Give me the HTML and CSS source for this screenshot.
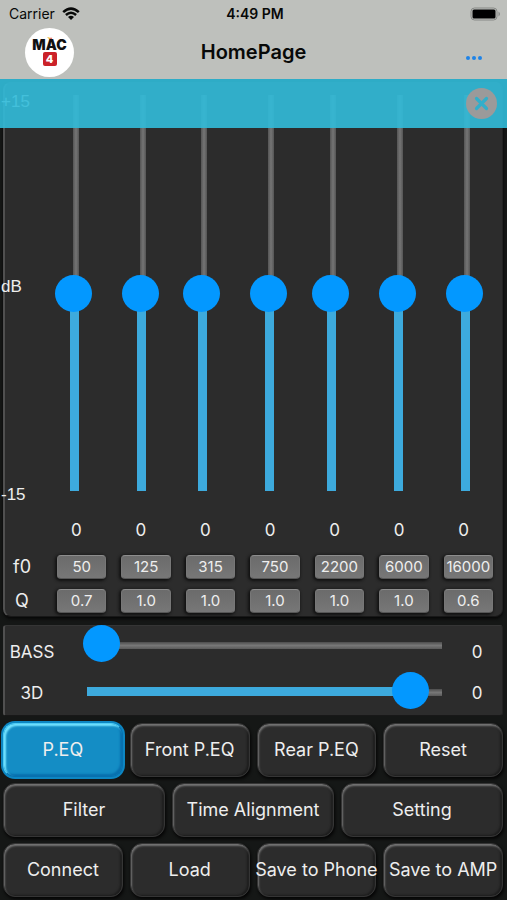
FILE: index.html
```html
<!DOCTYPE html>
<html lang="en">
<head>
<meta charset="utf-8">
<meta name="viewport" content="width=device-width, initial-scale=1">
<title>HomePage</title>
<link rel="stylesheet" href="styles.css">
</head>
<body>
<header class="header">
  <div class="status">
    <div class="carrier">
      <span>Carrier</span>
      <svg class="wifi" viewBox="0 0 18 14" aria-hidden="true">
        <path d="M1.2 5.2Q9-2 16.8 5.2M3.9 8Q9 3.4 14.1 8" fill="none" stroke="#080908" stroke-width="2.5"/>
        <path d="M6 9.900Q9 7.400 12 9.900L9 13z" fill="#080908"/>
      </svg>
    </div>
    <strong class="clock">4:49 PM</strong>
    <svg class="battery" viewBox="0 0 31 14" aria-label="Battery full">
      <rect x="1" y="1" width="26" height="12" rx="3.500" fill="none" stroke="#868885"/>
      <rect x="2.500" y="2.500" width="23" height="9" rx="1.500" fill="#000"/>
      <path d="M28.500 4.500q3 2.500 0 5z" fill="#868885"/>
    </svg>
  </div>
  <div class="navbar">
    <div class="logo" role="img" aria-label="MAC 4">
      <svg class="spark" viewBox="0 0 8 4" aria-hidden="true"><path d="M0 0l4 1v3z" fill="#f0b429"/><path d="M4 1l3 0-2 3z" fill="#e2574c"/></svg>
      <span class="logo-name">MAC</span>
      <span class="logo-num">4</span>
    </div>
    <h1 class="title">HomePage</h1>
    <button class="more" type="button" aria-label="More"><i></i><i></i><i></i></button>
  </div>
</header>

<main class="main">
  <div class="banner">
    <button class="close" type="button" aria-label="Close">
      <svg viewBox="0 0 31 31" aria-hidden="true"><circle cx="15.500" cy="15.500" r="15.500" fill="#9b9a9a"/><path d="M10.500 10.500l10 10M20.500 10.500l-10 10" stroke="#32aeca" stroke-width="3.200" stroke-linecap="round"/></svg>
    </button>
  </div>

  <section class="panel eq">
    <div class="faders">
      <div class="scale"><span>+15</span><span>dB</span><span>-15</span></div>
      <div class="tracks">
        <input class="vertical" type="range" min="-15" max="15" value="0" aria-label="Band 1 gain">
        <input class="vertical" type="range" min="-15" max="15" value="0" aria-label="Band 2 gain">
        <input class="vertical" type="range" min="-15" max="15" value="0" aria-label="Band 3 gain">
        <input class="vertical" type="range" min="-15" max="15" value="0" aria-label="Band 4 gain">
        <input class="vertical" type="range" min="-15" max="15" value="0" aria-label="Band 5 gain">
        <input class="vertical" type="range" min="-15" max="15" value="0" aria-label="Band 6 gain">
        <input class="vertical" type="range" min="-15" max="15" value="0" aria-label="Band 7 gain">
      </div>
    </div>
    <div class="gains">
      <output>0</output><output>0</output><output>0</output><output>0</output><output>0</output><output>0</output><output>0</output>
    </div>
    <div class="params">
      <span class="param-name">f0</span>
      <button type="button">50</button><button type="button">125</button><button type="button">315</button><button type="button">750</button><button type="button">2200</button><button type="button">6000</button><button type="button">16000</button>
      <span class="param-name">Q</span>
      <button type="button">0.7</button><button type="button">1.0</button><button type="button">1.0</button><button type="button">1.0</button><button type="button">1.0</button><button type="button">1.0</button><button type="button">0.6</button>
    </div>
  </section>

  <section class="panel effects">
    <label for="bass">BASS</label>
    <input class="horizontal bass" id="bass" type="range" min="0" max="100" value="0">
    <output for="bass">0</output>
    <label for="surround">3D</label>
    <input class="horizontal surround" id="surround" type="range" min="0" max="100" value="96">
    <output for="surround">0</output>
  </section>

  <nav class="actions">
    <div class="row four">
      <button class="key active" type="button">P.EQ</button>
      <button class="key" type="button">Front P.EQ</button>
      <button class="key" type="button">Rear P.EQ</button>
      <button class="key" type="button">Reset</button>
    </div>
    <div class="row three">
      <button class="key" type="button">Filter</button>
      <button class="key" type="button">Time Alignment</button>
      <button class="key" type="button">Setting</button>
    </div>
    <div class="row four">
      <button class="key" type="button">Connect</button>
      <button class="key" type="button">Load</button>
      <button class="key" type="button">Save to Phone</button>
      <button class="key" type="button">Save to AMP</button>
    </div>
  </nav>
</main>
</body>
</html>
```
FILE: styles.css
```css
* { box-sizing: border-box; }

body {
  margin: 0;
  min-height: 100vh;
  display: flex;
  flex-direction: column;
  background: #151716;
  color: #eee;
  font-family: Inter, "Liberation Sans", sans-serif;
  font-size: 16px;
}

button {
  margin: 0;
  padding: 0;
  border: 0;
  background: none;
  color: inherit;
  font: inherit;
}

/* Header */
.header {
  background: #bec0bc;
  color: #080908;
  height: 79px;
}

.status {
  display: grid;
  grid-template-columns: 1fr auto 1fr;
  align-items: center;
  height: 27px;
  padding: 0 6px 0 9px;
  font-size: 14px;
}

.carrier { display: flex; align-items: center; gap: 7px; }
.wifi { width: 18px; height: 14px; }
.clock { font-weight: 600; }
.battery { width: 31px; height: 14px; justify-self: end; }

.navbar {
  display: grid;
  grid-template-columns: 1fr auto 1fr;
  align-items: center;
  height: 50px;
  padding: 0 25px;
}

.logo {
  width: 49px;
  height: 49px;
  border-radius: 50%;
  background: #fff;
  display: flex;
  flex-direction: column;
  align-items: center;
  padding-top: 9px;
}

.spark { width: 8px; height: 3px; }

.logo-name {
  color: #111;
  font: 900 14px/10px Inter, sans-serif;
}

.logo-num {
  width: 14px;
  height: 14px;
  margin-top: 2px;
  border-radius: 2px;
  background: #cb2229;
  color: #fff;
  font: 800 11px/14px Inter, sans-serif;
  text-align: center;
}

.title { margin: 0; font-size: 20px; font-weight: 600; line-height: 24px; }

.more { display: flex; gap: 2px; justify-self: end; padding-top: 12px; }
.more i { width: 4px; height: 4px; border-radius: 50%; background: #1e83e8; }

/* Main */
.main {
  position: relative;
  flex: 1;
  display: flex;
  flex-direction: column;
  padding: 3px 4px 3px 3px;
}

.banner {
  position: absolute;
  z-index: 2;
  top: 0;
  left: 0;
  right: 0;
  height: 49px;
  padding-right: 10px;
  display: flex;
  align-items: center;
  justify-content: flex-end;
  background: rgba(50, 187, 217, 0.91);
}

.close { width: 31px; height: 31px; }
.close svg { display: block; }

.panel {
  background: #2c2c2c;
  border: 1px solid #353535;
  border-left: 2px solid #505050;
  border-right-color: #222;
  border-bottom-color: #181818;
}

.eq {
  flex: 1;
  display: flex;
  flex-direction: column;
  border-radius: 8px;
  box-shadow: 0 2px 3px #080808;
}

.faders {
  flex: 1;
  display: flex;
  padding-top: 12px;
}

.scale {
  width: 50px;
  margin: -3px 0 -14px -4px;
  display: grid;
  grid-template-rows: 185fr 208fr 20px;
  font: 17px/20px "Liberation Sans", sans-serif;
}

.tracks {
  flex: 1;
  display: grid;
  grid-template-columns: 67fr 61fr 67fr 61fr 67fr 67fr 38fr;
  padding: 0 18px 0 4px;
}

input[type="range"] {
  appearance: none;
  margin: 0;
  background: none;
}

input[type="range"]::-webkit-slider-thumb {
  appearance: none;
  width: 37px;
  height: 37px;
  border-radius: 50%;
  background: #0398ff;
}

.vertical {
  writing-mode: vertical-lr;
  direction: rtl;
  width: 37px;
  height: 100%;
}

.vertical::-webkit-slider-runnable-track {
  width: 37px;
  height: 100%;
  background:
    linear-gradient(#3daadd, #3daadd) 15px 100% / 9px 50% no-repeat,
    linear-gradient(90deg, #555, #757575 50%, #555) 18px 0 / 6px 50% no-repeat;
}

.gains {
  display: grid;
  grid-template-columns: repeat(7, 1fr);
  margin: 25px 6px 0 39px;
  font-size: 17px;
  line-height: 28px;
  text-align: center;
}

.params {
  display: grid;
  grid-template-columns: 37px repeat(7, 1fr);
  column-gap: 15px;
  row-gap: 10px;
  padding: 11px 9px 3px 0;
  align-items: center;
}

.param-name {
  padding-right: 3px;
  font-size: 18px;
  line-height: 24px;
  text-align: center;
}

.params button {
  height: 24px;
  border-radius: 4px;
  border: 1px solid #777;
  border-top-color: #8d8d8d;
  border-bottom-color: #565656;
  background: linear-gradient(#6b6b6b, #777);
  box-shadow: -1px 1px 3px 1px #111;
  font-size: 15px;
  line-height: 22px;
  white-space: nowrap;
  display: flex;
  align-items: center;
  justify-content: center;
}

/* Effects */
.effects {
  display: grid;
  grid-template-columns: 54px 1fr 50px;
  grid-template-rows: 40px 48px;
  column-gap: 24px;
  align-items: center;
  height: 91px;
  margin-top: 8px;
  border-radius: 3px;
}

.effects label,
.effects output {
  padding-top: 12px;
  font-size: 17px;
  text-align: center;
}

.effects label[for="surround"],
.effects output[for="surround"] { padding-top: 6px; }

.horizontal { width: calc(100% + 14px); height: 37px; }
.effects .bass { margin-bottom: 6px; }

.horizontal::-webkit-slider-runnable-track { height: 37px; }

.bass::-webkit-slider-runnable-track {
  background: linear-gradient(#4d4d4d, #777 50%, #5a5a5a) 4px 17px / 100% 7px no-repeat;
}

.surround::-webkit-slider-runnable-track {
  background:
    linear-gradient(#3daadd, #3daadd) 4px 15px / 90% 9px no-repeat,
    linear-gradient(#4d4d4d, #777 50%, #5a5a5a) 4px 17px / 100% 7px no-repeat;
}

/* Buttons */
.actions { display: flex; flex-direction: column; gap: 6px; margin-top: 7px; }
.row { display: grid; gap: 7px; }
.four { grid-template-columns: repeat(4, minmax(0, 1fr)); }
.three { grid-template-columns: repeat(3, minmax(0, 1fr)); }

.key {
  height: 54px;
  border-radius: 12px;
  border: 1px solid #353535;
  background: #2c2c2c;
  box-shadow:
    inset 1px 2px 2px #747474,
    inset -2px -1px 2px #1d1d1d,
    1px 2px 3px #050505;
  font-size: 18px;
  line-height: 24px;
  white-space: nowrap;
  display: flex;
  align-items: center;
  justify-content: center;
}

.active {
  border-color: #4fcdf5;
  border-right-color: #0870ae;
  border-bottom-color: #0870ae;
  background: #148dc5;
  box-shadow:
    inset 2px 2px 2px #73e3ff,
    inset -2px -2px 2px #0870ae,
    0 0 0 2px #0d86c2;
}
```
